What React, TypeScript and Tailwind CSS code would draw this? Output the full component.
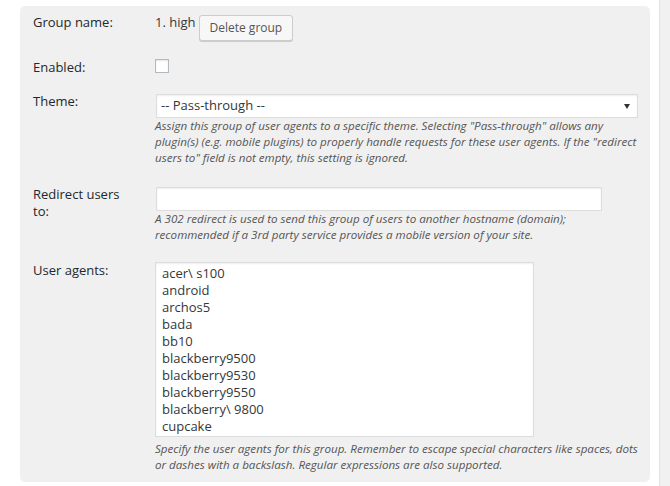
const agents = [
  'acer\\ s100',
  'android',
  'archos5',
  'bada',
  'bb10',
  'blackberry9500',
  'blackberry9530',
  'blackberry9550',
  'blackberry\\ 9800',
  'cupcake',
];

function Label({ children }: { children: React.ReactNode }) {
  return <div className="w-[122px] shrink-0 text-[13px] leading-[18px] text-[#23282d]">{children}</div>;
}

function Note({ children }: { children: React.ReactNode }) {
  return <p className="text-[11.6px] italic leading-[16px] text-[#555] whitespace-nowrap">{children}</p>;
}

export default function App() {
  return (
    <div className="flex h-[486px] w-[670px] overflow-hidden bg-white font-['Open_Sans',sans-serif]">
      <div className="flex-1">
        <div className="ml-[20px] mt-[6px] h-[476px] w-[630px] rounded-[5px] bg-[#f0f0f0] pl-[13px] pr-[12px] pt-[7px]">
          {/* group name */}
          <div className="flex">
            <Label>Group name:</Label>
            <div className="flex min-w-0 flex-1 items-start">
              <span className="text-[13px] leading-[18px] text-[#32373c]">1. high</span>
              <button className="ml-[3px] mt-[2px] h-[26px] rounded-[3px] border border-[#ccc] bg-[#f7f7f7] px-[10px] text-[12px] leading-[24px] text-[#555] shadow-[0_1px_0_#ccc]">
                Delete group
              </button>
            </div>
          </div>

          {/* enabled */}
          <div className="mt-[17px] flex">
            <Label>Enabled:</Label>
            <div className="min-w-0 flex-1">
              <div className="mt-[1px] h-[14px] w-[14px] border border-[#b4b9be] bg-white shadow-[inset_0_1px_2px_rgba(0,0,0,0.1)]" />
            </div>
          </div>

          {/* theme */}
          <div className="mt-[16px] flex">
            <Label>Theme:</Label>
            <div className="min-w-0 flex-1">
              <div className="mt-[2px] ml-[1px] flex h-[24px] w-[482px] items-center justify-between border border-[#ddd] bg-white pl-[4px] pr-[7px] shadow-[inset_0_1px_2px_rgba(0,0,0,0.07)]">
                <span className="text-[13px] text-[#32373c]">-- Pass-through --</span>
                <svg width="6" height="5" viewBox="0 0 6 5">
                  <path d="M0 0h6L3 5z" fill="#333" />
                </svg>
              </div>
              <Note>
                Assign this group of user agents to a specific theme. Selecting "Pass-through" allows any
                <br />
                plugin(s) (e.g. mobile plugins) to properly handle requests for these user agents. If the "redirect
                <br />
                users to" field is not empty, this setting is ignored.
              </Note>
            </div>
          </div>

          {/* redirect */}
          <div className="mt-[20px] flex">
            <div className="w-[122px] shrink-0 text-[13px] leading-[17px] text-[#23282d]">
              Redirect users
              <br />
              to:
            </div>
            <div className="min-w-0 flex-1">
              <input
                readOnly
                className="mt-[1px] ml-[1px] block h-[24px] w-[446px] border border-[#ddd] bg-white shadow-[inset_0_1px_2px_rgba(0,0,0,0.07)] outline-none"
              />
              <Note>
                A 302 redirect is used to send this group of users to another hostname (domain);
                <br />
                recommended if a 3rd party service provides a mobile version of your site.
              </Note>
            </div>
          </div>

          {/* user agents */}
          <div className="mt-[18px] flex">
            <Label>User agents:</Label>
            <div className="min-w-0 flex-1">
              <div className="mt-[1px] h-[175px] w-[379px] overflow-hidden border border-[#ddd] bg-white px-[6px] py-[2px] text-[13px] leading-[17px] text-[#32373c] shadow-[inset_0_1px_2px_rgba(0,0,0,0.07)]">
                {agents.map((a) => (
                  <div key={a}>{a}</div>
                ))}
              </div>
              <div className="mt-[4px]">
                <Note>
                  Specify the user agents for this group. Remember to escape special characters like spaces, dots
                  <br />
                  or dashes with a backslash. Regular expressions are also supported.
                </Note>
              </div>
            </div>
          </div>
        </div>
      </div>
      <div className="w-[11px] border-l border-[#e2e2e2] bg-[#f1f1f1]" />
    </div>
  );
}
